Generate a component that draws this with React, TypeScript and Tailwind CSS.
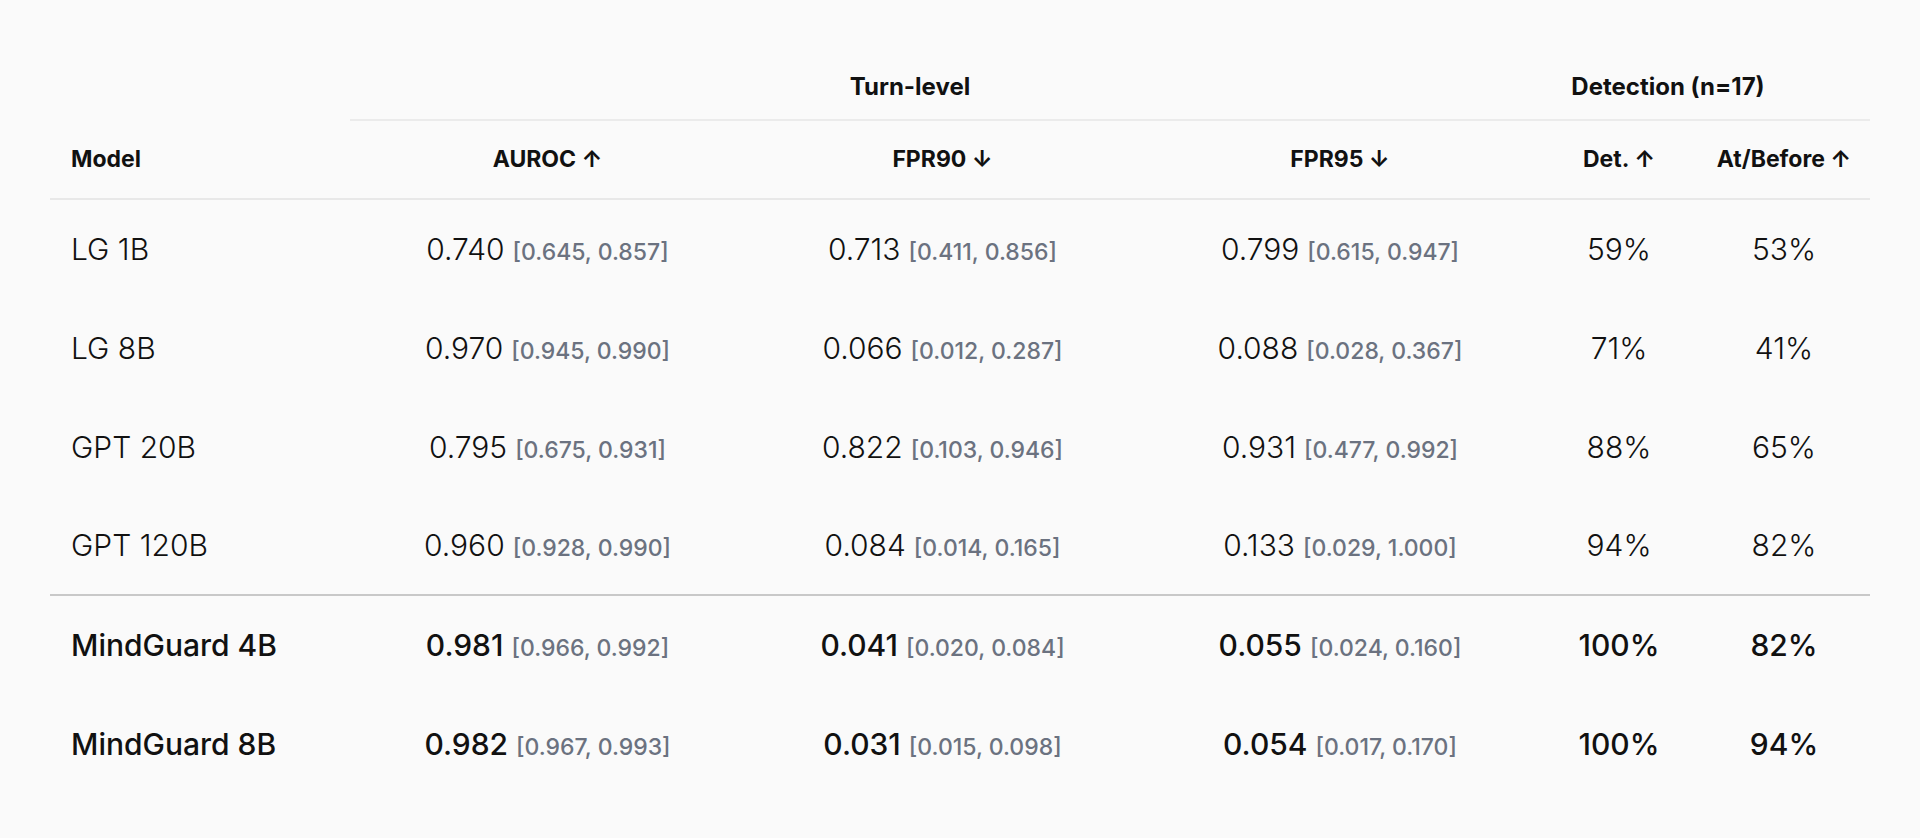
import React from "react";

type Row = {
  name: string;
  auroc: [string, string];
  fpr90: [string, string];
  fpr95: [string, string];
  det: string;
  at: string;
  strong?: boolean;
  divider?: boolean;
};

const rows: Row[] = [
  { name: "LG 1B", auroc: ["0.740", "[0.645, 0.857]"], fpr90: ["0.713", "[0.411, 0.856]"], fpr95: ["0.799", "[0.615, 0.947]"], det: "59%", at: "53%" },
  { name: "LG 8B", auroc: ["0.970", "[0.945, 0.990]"], fpr90: ["0.066", "[0.012, 0.287]"], fpr95: ["0.088", "[0.028, 0.367]"], det: "71%", at: "41%" },
  { name: "GPT 20B", auroc: ["0.795", "[0.675, 0.931]"], fpr90: ["0.822", "[0.103, 0.946]"], fpr95: ["0.931", "[0.477, 0.992]"], det: "88%", at: "65%" },
  { name: "GPT 120B", auroc: ["0.960", "[0.928, 0.990]"], fpr90: ["0.084", "[0.014, 0.165]"], fpr95: ["0.133", "[0.029, 1.000]"], det: "94%", at: "82%", divider: true },
  { name: "MindGuard 4B", auroc: ["0.981", "[0.966, 0.992]"], fpr90: ["0.041", "[0.020, 0.084]"], fpr95: ["0.055", "[0.024, 0.160]"], det: "100%", at: "82%", strong: true },
  { name: "MindGuard 8B", auroc: ["0.982", "[0.967, 0.993]"], fpr90: ["0.031", "[0.015, 0.098]"], fpr95: ["0.054", "[0.017, 0.170]"], det: "100%", at: "94%", strong: true },
];

function Metric({ v, strong }: { v: [string, string]; strong?: boolean }) {
  return (
    <span className="whitespace-nowrap">
      <span className={strong ? "font-medium" : "font-light"}>{v[0]}</span>
      <span className="ml-2 text-[23px] font-medium text-[#6b7280]">{v[1]}</span>
    </span>
  );
}

export default function App() {
  return (
    <div
      className="min-h-screen bg-[#fafafa] px-[50px] pt-[55px] text-[#111111]"
      style={{ fontFamily: "Inter, 'Noto Sans', sans-serif" }}
    >
      <div className="grid grid-cols-[300px_395px_395px_400px_158px_172px]">
        {/* group header row */}
        <div className="h-[66px]" />
        <div className="col-span-3 flex h-[66px] items-center justify-center border-b-2 border-[#ebebeb] pr-[70px] text-[24px] font-bold">
          Turn-level
        </div>
        <div className="col-span-2 flex h-[66px] items-center justify-center border-b-2 border-[#ebebeb] pr-[74px] text-[24px] font-bold">
          Detection (n=17)
        </div>

        {/* column header row */}
        <div className="flex h-[79px] items-center border-b-2 border-[#e8e8e8] pl-[21px] text-[23px] font-bold">
          Model
        </div>
        <div className="flex h-[79px] items-center justify-center border-b-2 border-[#e8e8e8] text-[23px] font-bold">
          AUROC ↑
        </div>
        <div className="flex h-[79px] items-center justify-center border-b-2 border-[#e8e8e8] text-[23px] font-bold">
          FPR90 ↓
        </div>
        <div className="flex h-[79px] items-center justify-center border-b-2 border-[#e8e8e8] text-[23px] font-bold">
          FPR95 ↓
        </div>
        <div className="flex h-[79px] items-center justify-center border-b-2 border-[#e8e8e8] text-[23px] font-bold">
          Det. ↑
        </div>
        <div className="flex h-[79px] items-center justify-center border-b-2 border-[#e8e8e8] text-[23px] font-bold">
          At/Before ↑
        </div>

        {rows.map((r) => {
          const cell = r.divider
            ? "flex h-[99px] items-center border-b-2 border-[#c8c8c8] text-[30px]"
            : "flex h-[99px] items-center text-[30px]";
          const w = r.strong ? "font-medium" : "font-light";
          return (
            <React.Fragment key={r.name}>
              <div className={`${cell} pl-[21px] ${w}`}>{r.name}</div>
              <div className={`${cell} justify-center`}>
                <Metric v={r.auroc} strong={r.strong} />
              </div>
              <div className={`${cell} justify-center`}>
                <Metric v={r.fpr90} strong={r.strong} />
              </div>
              <div className={`${cell} justify-center`}>
                <Metric v={r.fpr95} strong={r.strong} />
              </div>
              <div className={`${cell} justify-center ${w}`}>{r.det}</div>
              <div className={`${cell} justify-center ${w}`}>{r.at}</div>
            </React.Fragment>
          );
        })}
      </div>
    </div>
  );
}
